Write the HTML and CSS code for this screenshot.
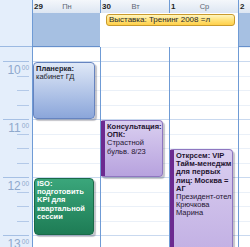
FILE: index.html
```html
<!DOCTYPE html>
<html lang="ru">
<head>
<meta charset="utf-8">
<title>Календарь</title>
<link rel="stylesheet" href="styles.css">
</head>
<body>
<div class="cal">
  <div class="top">
    <div class="corner"></div>
    <div class="dhead"><span class="date">29</span><span class="wd">Пн</span></div>
    <div class="dhead"><span class="date">30</span><span class="wd">Вт</span></div>
    <div class="dhead"><span class="date">1</span><span class="wd">Ср</span></div>
    <div class="dhead"><span class="date">2</span></div>
    <div class="allday"></div>
    <div class="allday"></div>
    <div class="allday"></div>
    <div class="allday"></div>
    <div class="adevent">Выставка: Тренинг 2008 =л</div>
  </div>
  <div class="main">
    <div class="ruler">
      <div class="lead"></div>
      <div class="q q1"><span class="h">10</span><span class="m">00</span></div>
      <div class="q q2"></div>
      <div class="q q3"></div>
      <div class="q q4"></div>
      <div class="q q1"><span class="h">11</span><span class="m">00</span></div>
      <div class="q q2"></div>
      <div class="q q3"></div>
      <div class="q q4"></div>
      <div class="q q1"><span class="h">12</span><span class="m">00</span></div>
      <div class="q q2"></div>
      <div class="q q3"></div>
      <div class="q q4"></div>
      <div class="q q1"><span class="h">13</span><span class="m">00</span></div>
    </div>
    <div class="day">
      <div class="ev blue ev-plan"><b>Планерка:</b><br>кабинет ГД</div>
      <div class="ev green ev-iso"><b>ISO:<br>подготовить<br>KPI для<br>квартальной<br>сессии</b></div>
    </div>
    <div class="day">
      <div class="ev purple ev-kons"><b>Консультация:<br>ОПК:</b><br>Страстной<br>бульв. 8/23</div>
    </div>
    <div class="day">
      <div class="ev purple ev-vip"><b>Открсем: VIP<br>Тайм-менеджм<br>для первых<br>лиц: Москва =<br>АГ</b><br>Президент-отел<br>Крючкова<br>Марина</div>
    </div>
    <div class="day"></div>
  </div>
</div>
</body>
</html>
```
FILE: styles.css
```css
* { box-sizing: border-box; }
html, body { margin: 0; padding: 0; }
body {
  width: 250px;
  height: 247px;
  overflow: hidden;
  background: #fff;
  font-family: "Liberation Sans", Arial, sans-serif;
}
.cal { width: 250px; height: 247px; overflow: hidden; }

.top {
  display: grid;
  grid-template-columns: 32px 68px 69px 69px 12px;
  grid-template-rows: 13px 34px;
}
.corner {
  grid-row: 1 / 3;
  grid-column: 1;
  background: #e4eefb;
  border-bottom: 1px solid #9bb9e2;
}
.dhead {
  grid-row: 1;
  border-left: 1px solid #6f9bd5;
  background: linear-gradient(#f4f7fb, #dde6f2);
  display: grid;
  grid-template-columns: 1fr auto 1fr;
  align-items: center;
  padding-left: 1px;
  overflow: hidden;
  font-size: 8px;
  line-height: 12px;
}
.date { font-weight: bold; color: #1e1e1e; justify-self: start; }
.wd { color: #5d6674; font-size: 7.5px; }
.allday {
  grid-row: 2;
  background: #a6c0e2;
  border-left: 1px solid #6f9bd5;
  border-bottom: 1px solid #6690cc;
}
.adevent {
  grid-row: 2;
  grid-column: 3 / 5;
  align-self: start;
  margin: 1px 3px 0 6px;
  height: 12px;
  padding-left: 2px;
  border: 1px solid #c99a2c;
  border-radius: 3px;
  background: linear-gradient(#fff6c0, #ffe27a 50%, #ffd04a);
  font-size: 8px;
  line-height: 10px;
  color: #2a2a2a;
  white-space: nowrap;
  overflow: hidden;
}

.main {
  display: grid;
  grid-template-columns: 32px 68px 69px 69px 12px;
  height: 200px;
  overflow: hidden;
}
.ruler {
  background: #e4eefb;
  color: #8fa9cd;
}
.lead {
  height: 15px;
  border-bottom: 1px solid #a6c0e4;
  margin: 0 3px 0 3px;
}
.q {
  border-bottom: 1px solid #b3c9e8;
  margin: 0 3px 0 17px;
}
.q1 { height: 15px; }
.q2 { height: 14px; }
.q3 { height: 15px; }
.q4 { height: 14px; margin-left: 3px; border-bottom-color: #a6c0e4; }
.q1 {
  display: flex;
  justify-content: flex-end;
  align-items: flex-start;
  margin-left: 3px;
  border-bottom: none;
  position: relative;
}
.q1::after {
  content: "";
  position: absolute;
  left: 14px;
  right: 0;
  bottom: 0;
  border-bottom: 1px solid #b3c9e8;
}
.h { font-size: 12px; line-height: 14px; margin-top: 1px; }
.m { font-size: 6.5px; line-height: 8px; margin-left: 1px; margin-top: 2px; }

.day {
  position: relative;
  border-left: 1px solid #6f9bd5;
  background-color: #fff;
  background-image: linear-gradient(to bottom,
    #c9d9ef 0, #c9d9ef 1px, transparent 1px, transparent 15px,
    #eaf0f8 15px, #eaf0f8 16px, transparent 16px, transparent 29px,
    #eaf0f8 29px, #eaf0f8 30px, transparent 30px, transparent 44px,
    #eaf0f8 44px, #eaf0f8 45px, transparent 45px);
  background-size: 100% 58px;
  background-position: 0 14px;
  overflow: hidden;
}

.ev {
  position: absolute;
  font-size: 7.5px;
  line-height: 8.2px;
  border-radius: 4px;
  box-shadow: 2px 2px 1px rgba(60, 60, 80, 0.3);
  overflow: hidden;
  white-space: nowrap;
}
.ev b { font-weight: bold; }
.blue {
  background: linear-gradient(#dfe8f7, #8ba6da);
  border: 1px solid #6684c0;
  color: #1c1c2c;
  padding: 2px 2px 0 2px;
}
.green {
  background: linear-gradient(#3aa67b, #1e7c55);
  border: 1px solid #1a6a48;
  color: #fff;
  padding: 1px 2px 0 2px;
}
.purple {
  background: linear-gradient(#dacff0, #b7a2de);
  border: 1px solid #8f76c0;
  border-left: 5px solid #6c2a90;
  color: #1f1430;
  padding: 2px 2px 0 2px;
}
.ev-plan { left: 0; top: 15px; width: 62px; height: 57px; }
.ev-iso { left: 1px; top: 131px; width: 60px; height: 57px; }
.ev-kons { left: -1px; top: 73px; width: 63px; height: 57px; }
.ev-vip { left: -1px; top: 102px; width: 64px; height: 150px; }
```
